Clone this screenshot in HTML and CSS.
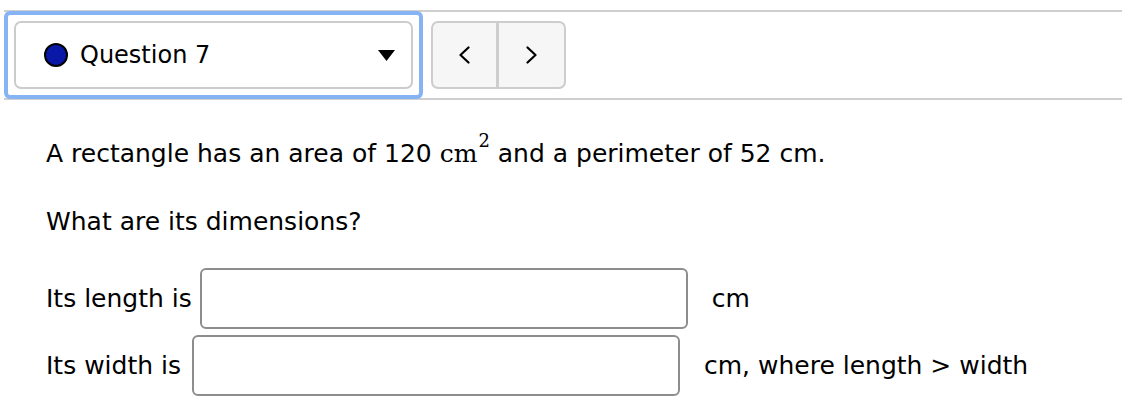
FILE: index.html
```html
<!DOCTYPE html>
<html lang="en">
<head>
<meta charset="utf-8">
<title>Question 7</title>
<link rel="stylesheet" href="styles.css">
</head>
<body>
<div class="nav">
  <div class="picker-ring">
    <div class="picker">
      <span class="status-dot"></span>
      <span class="picker-label">Question 7</span>
      <svg class="caret" width="17" height="11" viewBox="0 0 17 11"><polygon points="0,0 17,0 8.5,11" fill="#000"/></svg>
    </div>
  </div>
  <div class="pager">
    <div class="pager-btn">
      <svg width="13" height="18" viewBox="0 0 13 18"><polyline points="10.5,1.5 2.5,9 10.5,16.5" fill="none" stroke="#000" stroke-width="2.2" stroke-linecap="round" stroke-linejoin="round"/></svg>
    </div>
    <div class="pager-btn pager-next">
      <svg width="13" height="18" viewBox="0 0 13 18"><polyline points="2.5,1.5 10.5,9 2.5,16.5" fill="none" stroke="#000" stroke-width="2.2" stroke-linecap="round" stroke-linejoin="round"/></svg>
    </div>
  </div>
</div>

<div class="problem">
  <p class="line first">A rectangle has an area of 120 <span class="math">cm<sup class="exp">2</sup></span> and a perimeter of 52 cm.</p>
  <p class="line second">What are its dimensions?</p>
  <div class="row row-one">
    <span class="label">Its length is</span>
    <span class="answer"></span>
    <span class="unit">cm</span>
  </div>
  <div class="row row-two">
    <span class="label">Its width is</span>
    <span class="answer"></span>
    <span class="unit">cm, where length &gt; width</span>
  </div>
</div>
</body>
</html>
```

FILE: styles.css
```css
* { box-sizing: border-box; }

body {
  margin: 0;
  background: #fff;
  color: #000;
  font-family: "DejaVu Sans", "Liberation Sans", sans-serif;
  font-size: 25px;
  line-height: 30px;
}

.nav {
  margin: 10px 0 0 4px;
  height: 90px;
  border-top: 2px solid #cfcfcf;
  border-bottom: 2px solid #cfcfcf;
  display: flex;
  align-items: center;
}

.picker-ring {
  margin: -1px 0;
  height: 88px;
  border: 4px solid #85b3f4;
  border-radius: 6px;
  padding: 6px;
}

.picker {
  width: 399px;
  height: 68px;
  border: 2px solid #cccccc;
  border-radius: 7px;
  display: flex;
  align-items: center;
  padding: 0 16px 0 28px;
}

.status-dot {
  width: 24px;
  height: 24px;
  border-radius: 50%;
  background: #0a18a8;
  border: 2px solid #000;
  flex: none;
}

.picker-label {
  margin-left: 12px;
  font-size: 24px;
  flex: 1;
}

.caret { flex: none; }

.pager {
  margin-left: 8px;
  height: 68px;
  display: flex;
  border: 2px solid #cdcdcd;
  border-radius: 7px;
  background: #f6f6f6;
  overflow: hidden;
}

.pager-btn {
  width: 63px;
  display: flex;
  align-items: center;
  justify-content: center;
}

.pager-next {
  width: 68px;
  border-left: 3px solid #cdcdcd;
}

.problem {
  margin-left: 46px;
}

.line { margin: 0; }
.first { margin-top: 39px; }
.second { margin-top: 38px; }

.math {
  font-family: "DejaVu Serif", "Liberation Serif", serif;
  font-size: 25px;
}

.exp {
  font-size: 18px;
  line-height: 0;
  vertical-align: 15px;
  margin-left: 1px;
}

.row {
  display: flex;
  align-items: center;
}

.row-one { margin-top: 31px; }
.row-two { margin-top: 6px; }

.answer {
  margin-left: 8px;
  width: 488px;
  height: 61px;
  border: 2px solid #8d8d8d;
  border-radius: 6px;
  background: #fff;
}

.row-two .answer { margin-left: 11px; }

.unit {
  margin-left: 24px;
}
```
